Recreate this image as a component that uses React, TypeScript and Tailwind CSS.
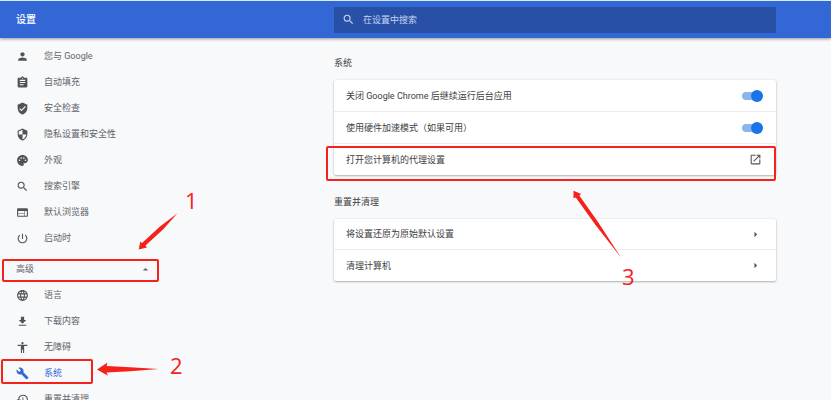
import { useState } from "react";
import type { ReactNode } from "react";
import type { IconType } from "react-icons";
import {
  MdAccessibility,
  MdArrowDropUp,
  MdArrowRight,
  MdAssignment,
  MdBuild,
  MdFileDownload,
  MdLanguage,
  MdOpenInNew,
  MdPalette,
  MdPerson,
  MdPowerSettingsNew,
  MdRestore,
  MdSearch,
  MdSecurity,
  MdVerifiedUser,
  MdWeb,
} from "react-icons/md";

type NavItem = { icon: IconType; label: string; active?: boolean };

const basicItems: NavItem[] = [
  { icon: MdPerson, label: "您与 Google" },
  { icon: MdAssignment, label: "自动填充" },
  { icon: MdVerifiedUser, label: "安全检查" },
  { icon: MdSecurity, label: "隐私设置和安全性" },
  { icon: MdPalette, label: "外观" },
  { icon: MdSearch, label: "搜索引擎" },
  { icon: MdWeb, label: "默认浏览器" },
  { icon: MdPowerSettingsNew, label: "启动时" },
];

const advancedItems: NavItem[] = [
  { icon: MdLanguage, label: "语言" },
  { icon: MdFileDownload, label: "下载内容" },
  { icon: MdAccessibility, label: "无障碍" },
  { icon: MdBuild, label: "系统", active: true },
  { icon: MdRestore, label: "重置并清理" },
];

function NavLink({ icon: Icon, label, active }: NavItem) {
  return (
    <a
      href="#"
      aria-current={active ? "page" : undefined}
      className={`flex h-[26px] items-center gap-[15px] pl-4 ${
        active ? "text-[#3367d6]" : "text-[#5f6368]"
      }`}
    >
      <Icon size={13} className={active ? "" : "text-[#505358]"} />
      {label}
    </a>
  );
}

function Section({ title, children }: { title: string; children: ReactNode }) {
  return (
    <section>
      <h2 className="mb-[9px] text-[9px] leading-4 text-[#3c4043]">{title}</h2>
      <div className="divide-y divide-[#ececec] rounded-xs bg-white shadow-[0_1px_2px_rgba(60,64,67,0.35),0_0_2px_rgba(60,64,67,0.15)]">
        {children}
      </div>
    </section>
  );
}

function ToggleRow({ label }: { label: string }) {
  const [on, setOn] = useState(true);
  return (
    <label className="flex h-8 items-center justify-between pl-3 pr-3.5">
      {label}
      <input
        type="checkbox"
        role="switch"
        checked={on}
        onChange={() => setOn(!on)}
        className="relative h-2 w-5 appearance-none rounded-full bg-[#bdc1c6] before:absolute before:-left-0.5 before:-top-0.5 before:h-3 before:w-3 before:rounded-full before:bg-white checked:bg-[#8cb4f0] checked:before:left-[9px] checked:before:bg-[#1a73e8]"
      />
    </label>
  );
}

function ActionRow({ label, icon: Icon }: { label: string; icon: IconType }) {
  return (
    <button
      type="button"
      className="flex h-[31px] w-full items-center justify-between pl-3 pr-3.5"
    >
      {label}
      <Icon size={13} className="text-[#505358]" />
    </button>
  );
}

/* Numbered steps drawn over the page */
function Annotations() {
  return (
    <div className="pointer-events-none absolute inset-0 font-['Open_Sans','Noto_Sans',sans-serif] text-[22px] leading-6 text-[#f5221b]">
      <div className="absolute left-0.5 top-[259px] h-[23px] w-[157px] rounded-xs border-2 border-current" />
      <div className="absolute left-px top-[359px] h-[25px] w-[92px] rounded-xs border-2 border-current" />
      <div className="absolute left-[326px] right-[55px] top-[146px] h-[35px] rounded-xs border-2 border-current" />
      <svg
        width="831"
        height="400"
        viewBox="0 0 831 400"
        fill="currentColor"
        className="absolute left-0 top-0"
        aria-hidden="true"
      >
        <path d="M138.700 249.500L140.300 241.500L142 243L160 226.500L177.500 213.300L163 229.500L145.500 245.500L147 247.500Z" />
        <path d="M97 369.400L107.500 362.500L106.500 366L130 367.200L158.500 369L130 371.300L106.500 372.500L108 375.800Z" />
        <path d="M573.500 190.800L581.200 194L579.300 195.500L598 222L621 257.500L595.500 225L575.800 197.500L573.500 198.300Z" />
      </svg>
      <span className="absolute left-[185px] top-[188px]">1</span>
      <span className="absolute left-[170px] top-[353px]">2</span>
      <span className="absolute left-[622px] top-[264px]">3</span>
    </div>
  );
}

export default function App() {
  return (
    <div
      lang="zh-CN"
      className="relative flex h-screen flex-col overflow-hidden bg-[#f8f9fb] font-[Roboto,'Noto_Sans_CJK_SC',sans-serif] text-[9px] leading-3 text-[#3c4043]"
    >
      <header className="z-10 flex h-[38px] shrink-0 items-center border-t border-[#d3f1fb] bg-[#3367d6] pr-[55px] text-white shadow-[0_1px_3px_rgba(0,0,0,0.4)]">
        <h1 className="w-[334px] shrink-0 pl-4 text-[10px] font-medium">设置</h1>
        <label className="flex h-[26px] flex-1 items-center gap-2 bg-[#2850a7] pl-2">
          <MdSearch size={13} className="text-[#c5d3f2]" />
          <input
            type="search"
            aria-label="在设置中搜索"
            placeholder="在设置中搜索"
            className="min-w-0 flex-1 bg-transparent outline-none placeholder:text-[#c5d3f2]"
          />
        </label>
      </header>

      <div className="flex min-h-0 flex-1 pr-[55px]">
        <nav className="w-[334px] shrink-0 pt-[5px]">
          {basicItems.map((item) => (
            <NavLink key={item.label} {...item} />
          ))}
          <button
            type="button"
            aria-expanded="true"
            className="mt-[5px] flex h-[26px] w-[152px] items-center justify-between pl-4 text-[#5f6368]"
          >
            高级
            <MdArrowDropUp size={13} />
          </button>
          {advancedItems.map((item) => (
            <NavLink key={item.label} {...item} />
          ))}
        </nav>

        <main className="flex min-w-0 flex-1 flex-col gap-[19px] pt-[17px]">
          <Section title="系统">
            <ToggleRow label="关闭 Google Chrome 后继续运行后台应用" />
            <ToggleRow label="使用硬件加速模式（如果可用）" />
            <ActionRow label="打开您计算机的代理设置" icon={MdOpenInNew} />
          </Section>
          <Section title="重置并清理">
            <ActionRow label="将设置还原为原始默认设置" icon={MdArrowRight} />
            <ActionRow label="清理计算机" icon={MdArrowRight} />
          </Section>
        </main>
      </div>

      <Annotations />
    </div>
  );
}
